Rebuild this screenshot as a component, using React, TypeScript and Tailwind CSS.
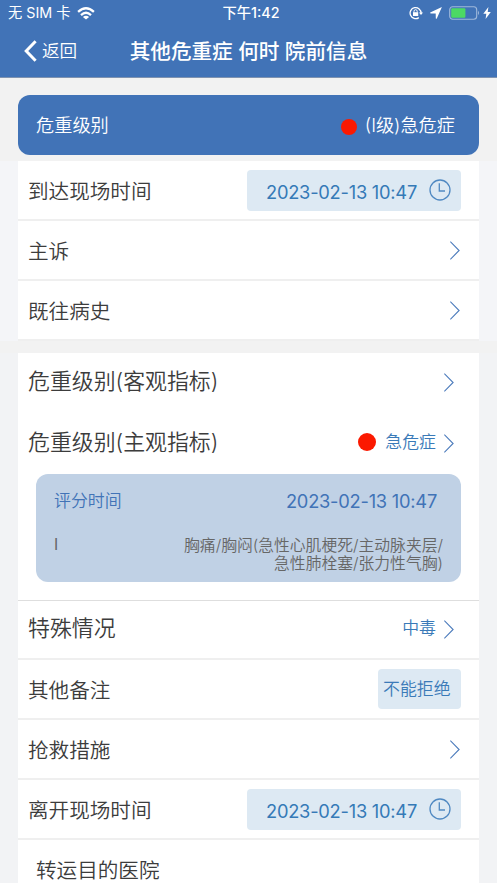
import React from "react";

interface RowProps {
  label: string;
  className?: string;
  labelClass?: string;
  children?: React.ReactNode;
}

function Chevron() {
  return (
    <svg className="w-[10px] h-[19px] shrink-0" viewBox="0 0 10 19" fill="none" stroke="#4a7abb" strokeWidth="1.1">
      <path d="M0.3 0.6 L9.1 9.5 L0.3 18.4" />
    </svg>
  );
}

function Clock() {
  return (
    <svg className="w-[22px] h-[22px] shrink-0" viewBox="0 0 22 22" fill="none" stroke="#5089c2" strokeWidth="1.3">
      <circle cx="11" cy="11" r="10" />
      <path d="M10.3 4.3 V12 H16" />
    </svg>
  );
}

function DateField({ value }: { value: string }) {
  return (
    <div className="flex items-center justify-between w-[214px] h-[41px] rounded-[4px] bg-[#dde9f3] pl-[19px] pr-[10px] mr-[18px]">
      <span className="text-[18.3px] leading-[22px] tracking-[-0.24px] text-[#357ab7] pt-[3px]">{value}</span>
      <Clock />
    </div>
  );
}

function Row({
  label,
  className = "h-[60px] border-b-2 border-[#efefef]",
  labelClass = "text-[20.6px] pt-[4px]",
  children,
}: RowProps) {
  return (
    <div className={`flex items-center justify-between pl-[10px] bg-white ${className}`}>
      <span className={`leading-[30px] font-[350] whitespace-nowrap ${labelClass}`}>{label}</span>
      {children}
    </div>
  );
}

function StatusBar() {
  return (
    <div className="relative flex items-center justify-between h-[26px] pl-[8px] pr-[6px]">
      <div className="flex items-center text-[14.3px] leading-[18px]">
        <span className="whitespace-nowrap">无 SIM 卡</span>
        <svg className="w-[18px] h-[13px] ml-[6px]" viewBox="0 0 18 13" fill="none" stroke="white" strokeWidth="2.3">
          <path d="M1.1 4.8 Q9 -2.2 16.9 4.8" />
          <path d="M4 8.1 Q9 3.5 14 8.1" />
          <path d="M9 12.6 L5.9 9.9 Q9 7.4 12.1 9.9 Z" fill="white" stroke="none" />
        </svg>
      </div>
      <div className="absolute inset-x-0 top-[4px] text-center text-[14.3px] leading-[18px] font-medium pl-[5px]">下午1:42</div>
      <div className="flex items-center">
        <svg className="w-[14px] h-[14px]" viewBox="0 0 14 14" fill="none" stroke="white" strokeWidth="1.3">
          <path d="M9.8 11.6 A5.5 5.5 0 1 1 12.1 7.2" />
          <path d="M10 6.4 H14 L12 9 Z" fill="white" stroke="none" />
          <rect x="4" y="6.2" width="5.2" height="3.8" fill="white" stroke="none" />
          <path d="M5 6.5 V5.3 A1.6 1.6 0 0 1 8.2 5.3 V6.5" strokeWidth="1" />
        </svg>
        <svg className="w-[12px] h-[12px] ml-[7px]" viewBox="0 0 12 12" fill="white">
          <path d="M11.9 0.1 L0.2 5.4 Q0 6.4 0.8 6.4 L5.7 6.5 L5.8 11.2 Q6 12.1 6.8 11.6 Z" />
        </svg>
        <svg className="w-[32px] h-[14px] ml-[7px]" viewBox="0 0 32 14">
          <rect x="0.7" y="0.7" width="27" height="12.6" rx="3" fill="none" stroke="white" strokeOpacity="0.5" strokeWidth="1.1" />
          <rect x="2.2" y="2.3" width="14.2" height="9.4" rx="1" fill="#4cd964" />
          <path d="M29 4.8 Q31 7 29 9.2 Z" fill="white" fillOpacity="0.5" />
        </svg>
        <svg className="w-[8px] h-[12px] ml-[2px]" viewBox="0 0 8 12" fill="white">
          <path d="M5.4 0 L0.3 6.8 H3.3 L2.6 12 L7.8 5 H4.7 Z" />
        </svg>
      </div>
    </div>
  );
}

export default function App() {
  return (
    <div className="w-[497px] h-[883px] overflow-hidden bg-[#f2f2f2] text-[#3c3c3c] font-['Inter','Noto_Sans_CJK_SC',sans-serif]">
      <header className="h-[78px] bg-[#4173b7] text-white border-b border-[#7f93b0]">
        <StatusBar />
        <div className="relative flex items-center h-[50px] pl-[24px]">
          <svg className="w-[13px] h-[22px]" viewBox="0 0 13 22" fill="none" stroke="white" strokeWidth="3">
            <path d="M11.6 1.2 L2.2 11 L11.6 20.8" />
          </svg>
          <span className="ml-[5px] text-[17.6px] leading-[26px] font-[350]">返回</span>
          <h1 className="absolute inset-x-0 top-[11px] text-center text-[20.6px] leading-[30px] font-medium">其他危重症 何时 院前信息</h1>
        </div>
      </header>

      <div className="flex items-center justify-between mx-[18px] mt-[17px] mb-[6px] h-[60px] rounded-[12px] bg-[#4173b7] text-white text-[18.2px] font-[350] pl-[18px] pr-[24px]">
        <span className="pt-[2px]">危重级别</span>
        <div className="flex items-center pt-[2px]">
          <span className="w-4 h-4 rounded-full bg-[#fb1900] mr-[8px] mt-[2px]" />
          <span>(I级)急危症</span>
        </div>
      </div>

      <section className="bg-[#f4f5f8] px-[18px]">
        <Row label="到达现场时间">
          <DateField value="2023-02-13 10:47" />
        </Row>
        <Row label="主诉">
          <div className="mr-[19px]"><Chevron /></div>
        </Row>
        <Row label="既往病史">
          <div className="mr-[19px]"><Chevron /></div>
        </Row>
      </section>

      <section className="bg-[#f2f3f5] px-[18px] mt-[12px]">
        <Row label="危重级别(客观指标)" className="h-[60px]" labelClass="text-[21.9px] pb-[4px]">
          <div className="mr-[25px] pb-[1px]"><Chevron /></div>
        </Row>
        <Row label="危重级别(主观指标)" className="h-[61px]" labelClass="text-[21.9px] pb-[4px]">
          <div className="flex items-center mr-[25px] text-[16.9px] font-[350] text-[#3a7ab8]">
            <span className="w-[18px] h-[18px] rounded-full bg-[#fb1900] mr-[9px] mb-[3px]" />
            <span className="mr-[8px] pb-[1px]">急危症</span>
            <Chevron />
          </div>
        </Row>
        <div className="bg-white px-[18px] pb-[18px] border-b border-[#dedede]">
          <div className="h-[108px] rounded-[12px] bg-[#c0d1e5] pl-[18px] pt-[15px] text-[#4173b7]">
            <div className="flex items-center justify-between h-[26px] pr-[24px]">
              <span className="text-[16.9px] font-[350]">评分时间</span>
              <span className="text-[18.3px] tracking-[-0.24px]">2023-02-13 10:47</span>
            </div>
            <div className="flex justify-between mt-[22px] pr-[18px] text-[15.8px] leading-[18px] text-[#666666]">
              <span className="-mt-[1px]">I</span>
              <div className="text-right whitespace-nowrap font-[350]">
                <p>胸痛/胸闷(急性心肌梗死/主动脉夹层/</p>
                <p>急性肺栓塞/张力性气胸)</p>
              </div>
            </div>
          </div>
        </div>
        <Row label="特殊情况" className="h-[59px] border-b-2 border-[#efefef]" labelClass="text-[21.9px] pb-[3px]">
          <div className="flex items-center mr-[25px] text-[16.9px] font-[350] text-[#3a7ab8]">
            <span className="mr-[8px] pb-[1px]">中毒</span>
            <Chevron />
          </div>
        </Row>
        <Row label="其他备注">
          <div className="flex items-center w-[83px] h-[40px] rounded-[4px] bg-[#dde9f3] text-[#3a7ab8] text-[16.9px] font-[350] pl-[5px] pt-[2px] mr-[18px] whitespace-nowrap">不能拒绝</div>
        </Row>
        <Row label="抢救措施">
          <div className="mr-[19px]"><Chevron /></div>
        </Row>
        <Row label="离开现场时间">
          <DateField value="2023-02-13 10:47" />
        </Row>
        <Row label="转运目的医院" className="h-[60px]" labelClass="text-[20.6px] ml-[8px] pt-[2px]" />
      </section>
    </div>
  );
}
